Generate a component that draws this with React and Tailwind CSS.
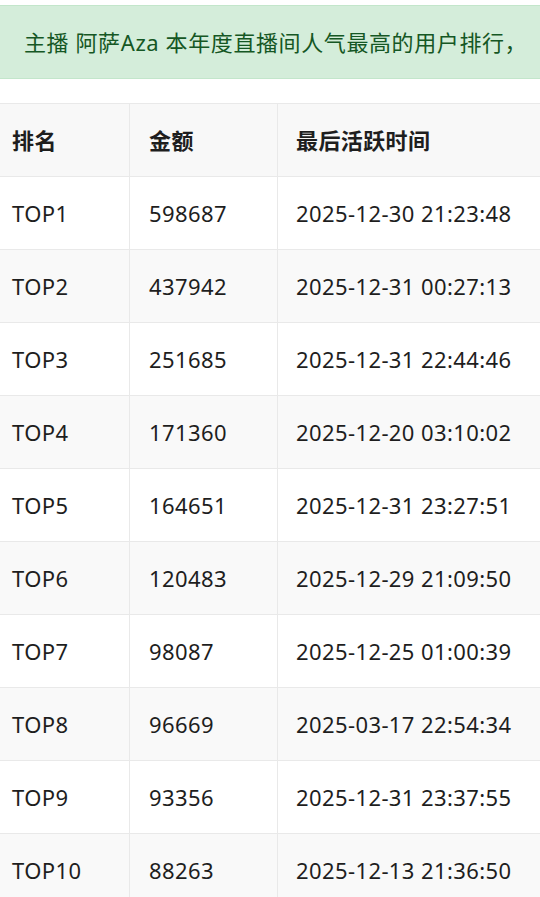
import React from "react";

const rows = [
  ["TOP1", "598687", "2025-12-30 21:23:48"],
  ["TOP2", "437942", "2025-12-31 00:27:13"],
  ["TOP3", "251685", "2025-12-31 22:44:46"],
  ["TOP4", "171360", "2025-12-20 03:10:02"],
  ["TOP5", "164651", "2025-12-31 23:27:51"],
  ["TOP6", "120483", "2025-12-29 21:09:50"],
  ["TOP7", "98087", "2025-12-25 01:00:39"],
  ["TOP8", "96669", "2025-03-17 22:54:34"],
  ["TOP9", "93356", "2025-12-31 23:37:55"],
  ["TOP10", "88263", "2025-12-13 21:36:50"],
];

function Row({ cells, header, striped }) {
  const bg = header ? "bg-[#f8f8f8]" : striped ? "bg-[#f9f9f9]" : "bg-white";
  const weight = header ? "font-bold" : "font-normal";
  return (
    <div className={`flex border-b border-[#e9e9e9] ${bg} ${weight}`}>
      <div className="w-[130px] shrink-0 border-r border-[#e9e9e9] pl-[12px] py-[20px] leading-[32px]">
        {cells[0]}
      </div>
      <div className="w-[148px] shrink-0 border-r border-[#e9e9e9] pl-[19px] py-[20px] leading-[32px]">
        {cells[1]}
      </div>
      <div className="flex-1 pl-[18px] py-[20px] leading-[32px] whitespace-nowrap">
        {cells[2]}
      </div>
    </div>
  );
}

export default function App() {
  return (
    <div
      className="w-[540px] h-[897px] overflow-hidden bg-white text-[22px] text-[#1e1e1e] tracking-[0.4px]"
      style={{ fontFamily: '"Noto Sans", "Noto Sans CJK SC", sans-serif' }}
    >
      <div className="pt-[5px]">
        <div className="w-[620px] border-y border-[#c3e6cb] bg-[#d4edda] text-[#155724] pl-[24px] py-[19px] leading-[34px] whitespace-nowrap tracking-[0.6px]">
          主播 阿萨Aza 本年度直播间人气最高的用户排行，
        </div>
      </div>
      <div className="mt-[24px] w-[620px] border-t border-[#e9e9e9]">
        <Row cells={["排名", "金额", "最后活跃时间"]} header />
        {rows.map((r, i) => (
          <Row key={r[0]} cells={r} striped={i % 2 === 1} />
        ))}
      </div>
    </div>
  );
}
